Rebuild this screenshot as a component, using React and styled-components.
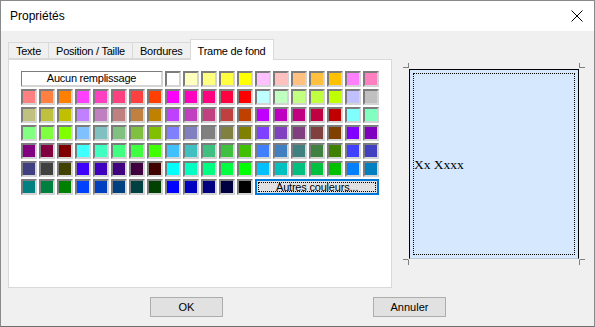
import styled, { createGlobalStyle } from "styled-components";

const LEVELS = ["FF", "C0", "80", "40", "00"];
const palette = [];
LEVELS.forEach((r) =>
  LEVELS.forEach((g) => LEVELS.forEach((b) => palette.push("#" + r + g + b)))
);

const row1 = palette.slice(0, 12);
const middle = palette.slice(12, 112);
const last = palette.slice(112);

const tabs = ["Texte", "Position / Taille", "Bordures", "Trame de fond"];

function CornerMark({ corner }) {
  // petites marques de coupe autour de l'aperçu
  const paths = {
    tl: "M0 4.5H5.5M5.5 0V5",
    tr: "M0.5 0V5M0.5 4.5H6",
    bl: "M5.5 1V6M0 0.5H5.5",
    br: "M0.5 1V6M0.5 0.5H6",
  };
  return (
    <Mark $corner={corner} width="6" height="6" viewBox="0 0 6 6">
      <path d={paths[corner]} stroke="#808080" strokeWidth="1" fill="none" />
    </Mark>
  );
}

export default function App() {
  return (
    <>
      <GlobalStyle />
      <Window>
        <TitleBar>
          <Title>Propriétés</Title>
          <Close width="12" height="12" viewBox="0 0 12 12">
            <path d="M0.5 0.5L11.5 11.5M11.5 0.5L0.5 11.5" stroke="#000" strokeWidth="1" />
          </Close>
        </TitleBar>
        <Body>
          <Main>
            <LeftPane>
              <TabStrip>
                {tabs.map((t, i) => (
                  <Tab key={t} $active={i === 3}>
                    {t}
                  </Tab>
                ))}
              </TabStrip>
              <Panel>
                <Grid>
                  <NoFill>Aucun remplissage</NoFill>
                  {row1.map((c, i) => (
                    <Swatch key={"a" + i} $color={c} />
                  ))}
                  {middle.map((c, i) => (
                    <Swatch key={"b" + i} $color={c} />
                  ))}
                  {last.map((c, i) => (
                    <Swatch key={"c" + i} $color={c} />
                  ))}
                  <MoreButton>
                    <Focus>Autres couleurs...</Focus>
                  </MoreButton>
                </Grid>
              </Panel>
            </LeftPane>
            <RightPane>
              <PreviewFrame>
                <CornerMark corner="tl" />
                <CornerMark corner="tr" />
                <CornerMark corner="bl" />
                <CornerMark corner="br" />
                <Preview>
                  <PreviewInner>
                    <Sample>Xx Xxxx</Sample>
                  </PreviewInner>
                </Preview>
              </PreviewFrame>
            </RightPane>
          </Main>
          <Footer>
            <Button>OK</Button>
            <Button>Annuler</Button>
          </Footer>
        </Body>
      </Window>
    </>
  );
}

const GlobalStyle = createGlobalStyle`
  body {
    margin: 0;
    background: #f0f0f0;
    font-family: "Liberation Sans", Arial, sans-serif;
  }
`;

const Window = styled.div`
  width: 595px;
  height: 327px;
  box-sizing: border-box;
  border: 1px solid #8a8a8a;
  border-bottom-color: #6f6f6f;
  display: flex;
  flex-direction: column;
  background: #f0f0f0;
`;

const TitleBar = styled.div`
  height: 30px;
  background: #ffffff;
  display: flex;
  align-items: center;
  justify-content: space-between;
  padding: 0 11px 0 9px;
`;

const Title = styled.span`
  font-size: 12px;
  color: #000;
`;

const Close = styled.svg`
  display: block;
`;

const Body = styled.div`
  flex: 1;
  display: flex;
  flex-direction: column;
  padding-top: 8px;
`;

const Main = styled.div`
  display: flex;
`;

const LeftPane = styled.div`
  margin-left: 7px;
  width: 384px;
  display: flex;
  flex-direction: column;
`;

const TabStrip = styled.div`
  display: flex;
  align-items: flex-end;
  height: 20px;
  position: relative;
  z-index: 1;
`;

const Tab = styled.div`
  box-sizing: border-box;
  height: ${(p) => (p.$active ? "21px" : "17px")};
  padding: ${(p) => (p.$active ? "1px 7px 0" : "0 7px")};
  margin-bottom: ${(p) => (p.$active ? "-1px" : "0")};
  margin-left: -1px;
  background: ${(p) => (p.$active ? "#ffffff" : "#f0f0f0")};
  border: 1px solid #d9d9d9;
  border-bottom: ${(p) => (p.$active ? "none" : "1px solid #d9d9d9")};
  &:first-child {
    margin-left: 0;
  }
  display: flex;
  align-items: center;
  font-size: 11px;
  letter-spacing: -0.25px;
  color: #000;
  white-space: nowrap;
`;

const Panel = styled.div`
  box-sizing: border-box;
  height: 229px;
  background: #ffffff;
  border: 1px solid #d9d9d9;
  padding: 11px 0 0 12px;
`;

const Grid = styled.div`
  display: grid;
  grid-template-columns: repeat(20, 16px);
  grid-auto-rows: 16px;
  gap: 2px;
`;

const Swatch = styled.div`
  box-sizing: border-box;
  background: ${(p) => p.$color};
  border-style: solid;
  border-width: 2px;
  border-color: #7c7c7c #d4d4d4 #d4d4d4 #7c7c7c;
`;

const NoFill = styled.div`
  grid-column: span 8;
  box-sizing: border-box;
  background: #fff;
  border-style: solid;
  border-width: 1px 2px 2px 1px;
  border-color: #7c7c7c #d4d4d4 #d4d4d4 #7c7c7c;
  font-size: 11px;
  letter-spacing: -0.25px;
  line-height: 13px;
  text-align: center;
  color: #000;
`;

const MoreButton = styled.div`
  grid-column: span 7;
  box-sizing: border-box;
  background: #e1e1e1;
  border: 2px solid #0078d7;
  padding: 1px;
  display: flex;
`;

const Focus = styled.div`
  flex: 1;
  border: 1px dotted #000;
  font-size: 11px;
  letter-spacing: -0.2px;
  line-height: 9px;
  text-align: center;
  color: #000;
`;

const RightPane = styled.div`
  flex: 1;
  padding: 30px 0 0 17px;
`;

const PreviewFrame = styled.div`
  position: relative;
  width: 170px;
  height: 190px;
`;

const Mark = styled.svg`
  position: absolute;
  ${(p) => (p.$corner[0] === "t" ? "top: -6px;" : "bottom: -6px;")}
  ${(p) => (p.$corner[1] === "l" ? "left: -6px;" : "right: -6px;")}
`;

const Preview = styled.div`
  box-sizing: border-box;
  width: 100%;
  height: 100%;
  background: #d5e8fe;
  border: 1px solid #000;
  border-bottom-color: #c0c8d0;
  padding: 3px;
  display: flex;
`;

const PreviewInner = styled.div`
  flex: 1;
  border: 1px dotted #000;
  display: flex;
  align-items: center;
`;

const Sample = styled.span`
  font-family: "Liberation Serif", "Times New Roman", serif;
  font-size: 13.5px;
  color: #000;
  margin-top: 1px;
`;

const Footer = styled.div`
  display: flex;
  padding: 9px 0 0 149px;
  gap: 150px;
`;

const Button = styled.button`
  box-sizing: border-box;
  width: 73px;
  height: 20px;
  background: #e1e1e1;
  border: 1px solid #adadad;
  border-radius: 0;
  font-family: "Liberation Sans", Arial, sans-serif;
  font-size: 11px;
  color: #000;
  padding: 0;
`;
